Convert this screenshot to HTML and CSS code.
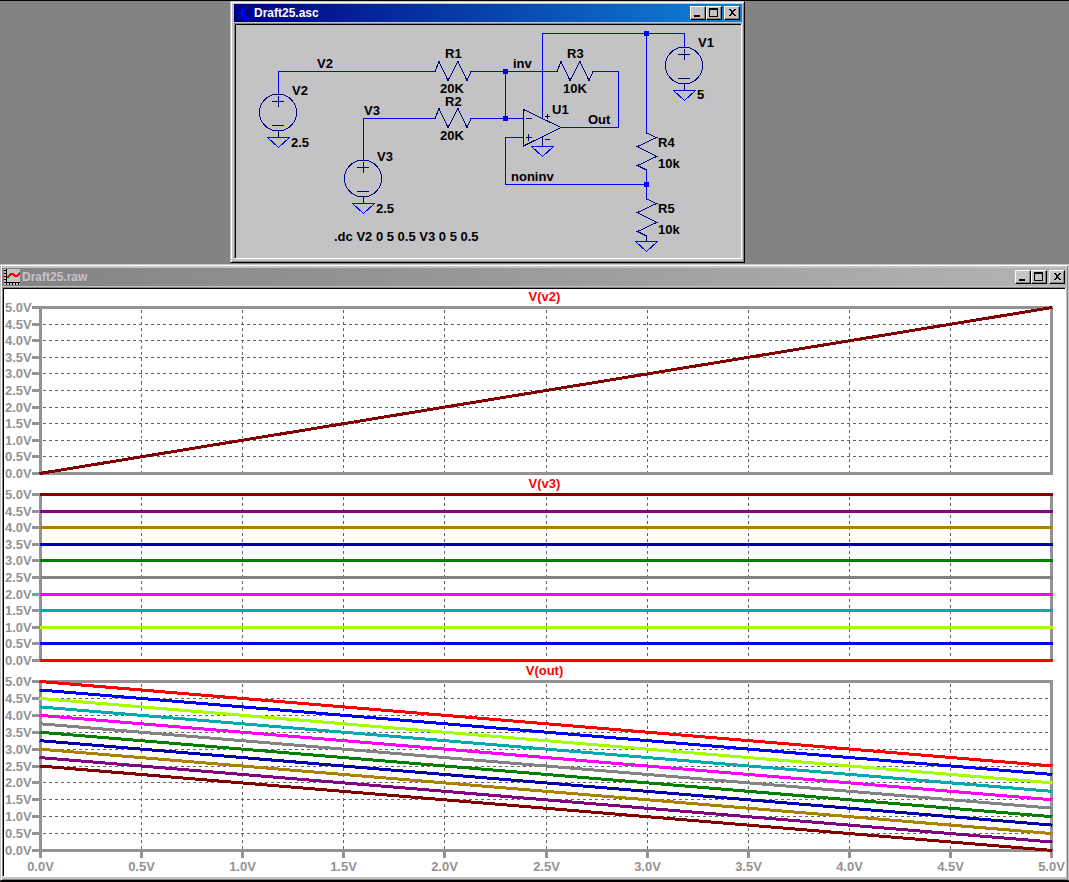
FILE: index.html
```html
<!DOCTYPE html>
<html lang="en">
<head>
    <meta charset="UTF-8">
    <meta name="viewport" content="width=device-width, initial-scale=1.0">
    <title>Draft25</title>
    <link rel="stylesheet" href="styles.css">
</head>
<body>
    <main class="desktop">
        <section class="window schematic">
            <header class="titlebar">
                <svg class="app-icon" viewBox="0 0 16 16" aria-hidden="true">
                    <path d="M2 7H5V3H7V13H5V9H2ZM9 16V14H8V13H9V14H10V13H11V11H12V13H13V15H11V16Z" fill="#0000ff"/>
                    <path d="M7 6.5L12 1.5M7 9.5L12 14.5" fill="none" stroke="#0000ff"/>
                </svg>
                <h1>Draft25.asc</h1>
                <div class="buttons">
                    <button aria-label="Minimize"><svg viewBox="0 0 12 10"><path d="M2 7H8V9H2Z"/></svg></button>
                    <button aria-label="Maximize"><svg viewBox="0 0 12 10"><path d="M1 0H10V9H1ZM2 2V8H9V2Z" fill-rule="evenodd"/></svg></button>
                    <button class="close" aria-label="Close"><svg viewBox="0 0 12 10"><path d="M2 1H4L6 3L8 1H10L7 4V5L10 8H8L6 6L4 8H2L5 5V4Z"/></svg></button>
                </div>
            </header>
            <div class="client">
                <svg class="circuit" viewBox="236 25 505 233" role="img" aria-label="Summing amplifier circuit">
                    <defs>
                        <g id="source">
                            <circle cx="0" cy="0" r="18.5"/>
                            <path d="M-6 -11H6M0 -17V-6M-6 13H6M0 18V25"/>
                        </g>
                        <path id="ground" d="M-11 0H11L0 10Z"/>
                        <path id="resistor" d="M0 0H1L5 -10L14 9L24 -10L33 9L37 0H38"/>
                    </defs>
                    <g class="wire">
                        <path d="M278.5 94V71.5H434M472 71.5H556M594 71.5H618.5V127.5H561"/>
                        <path d="M363.5 160V118.5H434M472 118.5H523M505.5 71.5V118.5"/>
                        <path d="M542.5 118V33.5H684.5V47M646.5 33.5V132M646.5 171V198"/>
                        <path d="M523 137.5H505.5V184.5H646.5"/>
                        <use href="#ground" x="278.5" y="137.5"/>
                        <use href="#ground" x="363.5" y="203.5"/>
                        <use href="#ground" x="684.5" y="90.5"/>
                        <use href="#ground" x="542.5" y="146.5"/>
                        <use href="#ground" x="646.5" y="241.5"/>
                    </g>
                    <g class="part">
                        <use href="#source" x="278" y="112.5"/>
                        <use href="#source" x="363" y="178.5"/>
                        <use href="#source" x="684" y="65.5"/>
                        <use href="#resistor" x="434" y="71.5"/>
                        <use href="#resistor" x="434" y="118.5"/>
                        <use href="#resistor" x="556" y="71.5"/>
                        <path d="M646.5 132V133L656.5 137.5L637.5 146.5L656.5 156.5L637.5 165.5L646.5 170V172"/>
                        <path d="M646.5 198V199L656.5 203.5L637.5 212.5L656.5 222.5L637.5 231.5L646.5 236V241"/>
                        <path d="M523.5 109.5L561 127.5L523.5 146Z"/>
                        <path d="M526 118.5H532M526 137.5H532M528.5 134V141M545 116.5H550M547.5 114V119M545 139.5H550M542.5 109V119M542.5 137V146"/>
                    </g>
                    <g class="node">
                        <rect x="503" y="69" width="5" height="5"/>
                        <rect x="503" y="116" width="5" height="5"/>
                        <rect x="644" y="31" width="5" height="5"/>
                        <rect x="644" y="182" width="5" height="5"/>
                    </g>
                    <g class="label">
                        <text x="317" y="68">V2</text>
                        <text x="292" y="95">V2</text>
                        <text x="291" y="147">2.5</text>
                        <text x="364" y="115">V3</text>
                        <text x="377" y="161">V3</text>
                        <text x="376" y="213">2.5</text>
                        <text x="445" y="58">R1</text>
                        <text x="440" y="93">20K</text>
                        <text x="445" y="106">R2</text>
                        <text x="440" y="140">20K</text>
                        <text x="513" y="68">inv</text>
                        <text x="567" y="58">R3</text>
                        <text x="563" y="93">10K</text>
                        <text x="552" y="114">U1</text>
                        <text x="588" y="124">Out</text>
                        <text x="698" y="47">V1</text>
                        <text x="697" y="99">5</text>
                        <text x="511" y="181">noninv</text>
                        <text x="658" y="147">R4</text>
                        <text x="658" y="168">10k</text>
                        <text x="658" y="213">R5</text>
                        <text x="658" y="234">10k</text>
                        <text x="334" y="241">.dc V2 0 5 0.5 V3 0 5 0.5</text>
                    </g>
                </svg>
            </div>
        </section>

        <section class="window waveform">
            <header class="titlebar inactive">
                <svg class="app-icon" viewBox="0 0 16 16" aria-hidden="true">
                    <rect width="16" height="16" fill="#c6c3c6"/>
                    <path d="M2 0H3V13H16V14H15V16H14V14H12V16H11V14H9V16H8V14H6V16H5V14H3V16H2V14H0V13H2V11H0V10H2V8H0V7H2V5H0V4H2V2H0V1H2Z" fill="#000"/>
                    <path d="M3 9L7 5H9L11 7H13L16 4" fill="none" stroke="#ff0000" stroke-width="2"/>
                </svg>
                <h1>Draft25.raw</h1>
                <div class="buttons">
                    <button aria-label="Minimize"><svg viewBox="0 0 12 10"><path d="M2 7H8V9H2Z"/></svg></button>
                    <button aria-label="Maximize"><svg viewBox="0 0 12 10"><path d="M1 0H10V9H1ZM2 2V8H9V2Z" fill-rule="evenodd"/></svg></button>
                    <button class="close" aria-label="Close"><svg viewBox="0 0 12 10"><path d="M2 1H4L6 3L8 1H10L7 4V5L10 8H8L6 6L4 8H2L5 5V4Z"/></svg></button>
                </div>
            </header>
            <div class="client">
                <div class="pane">
                    <h2>V(v2)</h2>
                    <svg id="plot-v2" class="plot" viewBox="0 0 1061 171"></svg>
                </div>
                <div class="pane">
                    <h2>V(v3)</h2>
                    <svg id="plot-v3" class="plot" viewBox="0 0 1061 171"></svg>
                </div>
                <div class="pane">
                    <h2>V(out)</h2>
                    <svg id="plot-out" class="plot" viewBox="0 0 1061 197"></svg>
                </div>
            </div>
        </section>
    </main>

    <script>
        const LEFT = 36.5;
        const RIGHT = 1047.5;
        const TOP = 2.5;

        // one colour per step of V3, from 0V to 5V
        const colors = ['#ff0000', '#0000ff', '#a5ff00', '#00aaad', '#ff00ff', '#848284',
            '#008200', '#0000ad', '#ad8200', '#840084', '#840000'];

        function add(svg, name, attrs, text) {
            const el = document.createElementNS('http://www.w3.org/2000/svg', name);
            Object.entries(attrs).forEach(([key, value]) => el.setAttribute(key, value));
            if (text) el.textContent = text;
            svg.appendChild(el);
        }

        function snap(value) {
            return Math.floor(value) + 0.5;
        }

        function drawPlot(id, bottom, traces, showAxis) {
            const svg = document.getElementById(id);
            const xAt = volts => LEFT + (RIGHT - LEFT) * volts / 5;
            const yAt = volts => bottom - (bottom - TOP) * volts / 5;

            for (let i = 0; i <= 10; i++) {
                const label = (i / 2).toFixed(1) + 'V';
                const x = snap(xAt(i / 2));
                const y = snap(yAt(i / 2));
                if (i > 0 && i < 10) {
                    add(svg, 'path', { class: 'grid', d: `M${LEFT + 2} ${y}H${RIGHT}` });
                    add(svg, 'path', { class: 'grid', d: `M${x} ${TOP + 2}V${bottom}` });
                }
                add(svg, 'path', { class: 'frame', d: `M28 ${y}H${LEFT}` });
                add(svg, 'text', { class: 'tick', x: 1, y: y + 4.5 }, label);
                if (showAxis) {
                    add(svg, 'path', { class: 'frame', d: `M${x} ${bottom}V${bottom + 7}` });
                    add(svg, 'text', { class: 'tick middle', x: x, y: bottom + 20.5 }, label);
                }
            }

            add(svg, 'rect', {
                class: 'frame', x: LEFT, y: TOP, width: RIGHT - LEFT, height: bottom - TOP
            });

            traces.forEach(([start, end, color]) => {
                add(svg, 'path', {
                    class: 'trace', stroke: color,
                    d: `M${LEFT - 1} ${yAt(start)}L${RIGHT + 1} ${yAt(end)}`
                });
            });
        }

        drawPlot('plot-v2', 168.5, [[0, 5, '#840000']], false);
        drawPlot('plot-v3', 168.5, colors.map((color, i) => [i / 2, i / 2, color]), false);
        drawPlot('plot-out', 171.5, colors.map((color, i) => [5 - i / 4, 2.5 - i / 4, color]), true);
    </script>
</body>
</html>
```
FILE: styles.css
```css
* {
    box-sizing: border-box;
}

body {
    margin: 0;
    background-color: #000;
    font-family: "Liberation Sans", Arial, sans-serif;
    font-weight: bold;
}

h1, h2 {
    margin: 0;
}

svg {
    display: block;
    shape-rendering: crispEdges;
}

.desktop {
    display: flex;
    flex-direction: column;
    gap: 1px;
    border-top: 1px solid #000;
    background-color: #838383;
}

.window {
    background-color: #c6c3c6;
    border: 1px solid #000;
    border-top-color: #c6c3c6;
    border-left-color: #c6c3c6;
    box-shadow: inset 1px 1px #fff, inset -1px -1px #848284;
}

.schematic {
    width: 515px;
    max-width: 100%;
    margin-left: 230px;
    padding: 2px 2px 3px 3px;
}

.waveform {
    padding: 3px 2px 3px 1px;
    border-right-color: #c6c3c6;
}

/* Title bar */
.titlebar {
    display: flex;
    align-items: center;
    height: 18px;
    padding: 0 2px;
    color: #fff;
    background: linear-gradient(to right, #000084, #1084d6);
}

.titlebar.inactive {
    padding-right: 1px;
    color: #c6c3c6;
    background: linear-gradient(to right, #848284, #b5b2b5);
}

.titlebar h1 {
    flex: 1;
    margin-left: 2px;
    font-size: 12px;
    line-height: 18px;
}

.app-icon {
    width: 16px;
    height: 16px;
}

.buttons {
    display: flex;
}

.buttons button {
    width: 16px;
    height: 14px;
    padding: 1px;
    border: 1px solid #000;
    border-top-color: #fff;
    border-left-color: #fff;
    background-color: #c6c3c6;
    box-shadow: inset -1px -1px #848284;
}

.buttons .close {
    margin-left: 2px;
}

.buttons svg {
    width: 12px;
    height: 10px;
}

.client {
    margin-top: 1px;
    border: 1px solid #848284;
    border-right-color: #fff;
    border-bottom-color: #fff;
}

/* Schematic */
.circuit {
    width: 100%;
    background-color: #c3c2c4;
}

.schematic .client {
    padding: 1px 0 0 1px;
    background-color: #000;
}

.wire {
    fill: none;
    stroke: #0000ff;
}

.part {
    fill: none;
    stroke: #000084;
}

.node {
    fill: #0000ff;
}

.label {
    font-size: 13px;
    fill: #000;
}

/* Waveforms */
.waveform .client {
    padding: 1px 0 0 1px;
    background-color: #000;
}

.pane {
    background-color: #fff;
}

.pane h2 {
    padding-left: 20px;
    color: #ff0000;
    font-size: 13px;
    line-height: 16px;
    text-align: center;
}

.plot {
    width: 100%;
    overflow: visible;
}

.grid {
    stroke: #636163;
    stroke-dasharray: 3 3;
}

.frame {
    fill: none;
    stroke: #949294;
    stroke-width: 3;
}

.trace {
    stroke-width: 3;
}

.tick {
    fill: #949294;
    font-size: 13px;
}

.middle {
    text-anchor: middle;
}
```
